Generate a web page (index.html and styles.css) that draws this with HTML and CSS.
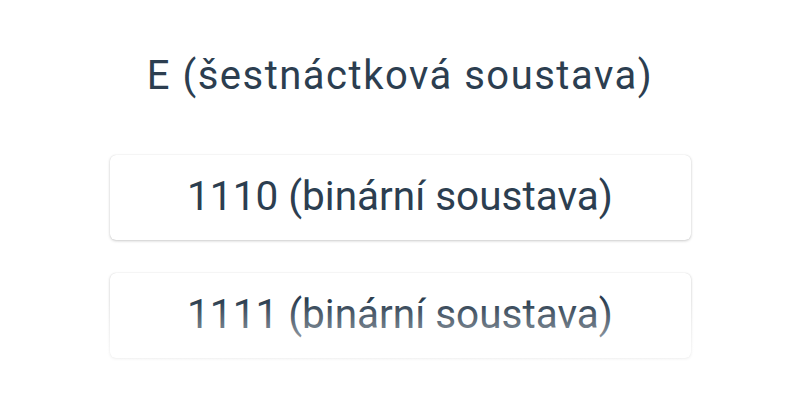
FILE: index.html
```html
<!DOCTYPE html>
<html lang="cs">
<head>
<meta charset="utf-8">
<link rel="stylesheet" href="styles.css">
</head>
<body>
<main class="quiz">
  <h1 class="question">E (šestnáctková soustava)</h1>
  <div class="options">
    <button class="option">1110 (binární soustava)</button>
    <button class="option">1111 (binární soustava)</button>
  </div>
  <div class="fade"></div>
</main>
</body>
</html>
```

FILE: styles.css
```css
html, body {
  margin: 0;
  padding: 0;
  background: #ffffff;
}
body {
  font-family: Roboto, "Noto Sans", sans-serif;
  color: #2c3e50;
  width: 800px;
  height: 400px;
  overflow: hidden;
}
.quiz {
  position: relative;
  height: 400px;
  display: flex;
  flex-direction: column;
  align-items: center;
  padding-top: 51px;
  box-sizing: border-box;
}
.question {
  margin: 0;
  font-weight: 400;
  font-size: 40px;
  letter-spacing: 1.5px;
  line-height: 50px;
  color: #2c3e50;
}
.options {
  margin-top: 54px;
  display: flex;
  flex-direction: column;
  gap: 33px;
  width: 581px;
}
.option {
  height: 85px;
  background: #fff;
  border: none;
  border-radius: 6px;
  box-shadow: 0 1px 3px rgba(0,0,0,0.2), 0 0 1px rgba(0,0,0,0.14);
  font-family: Roboto, "Noto Sans", sans-serif;
  font-size: 40.5px;
  color: #2c3e50;
  padding: 0 0 4px;
}
.fade {
  position: absolute;
  left: 0;
  right: 0;
  bottom: 0;
  height: 100px;
  background: linear-gradient(to bottom, rgba(255,255,255,0) 0%, rgba(255,255,255,1) 85%);
  pointer-events: none;
}
```
